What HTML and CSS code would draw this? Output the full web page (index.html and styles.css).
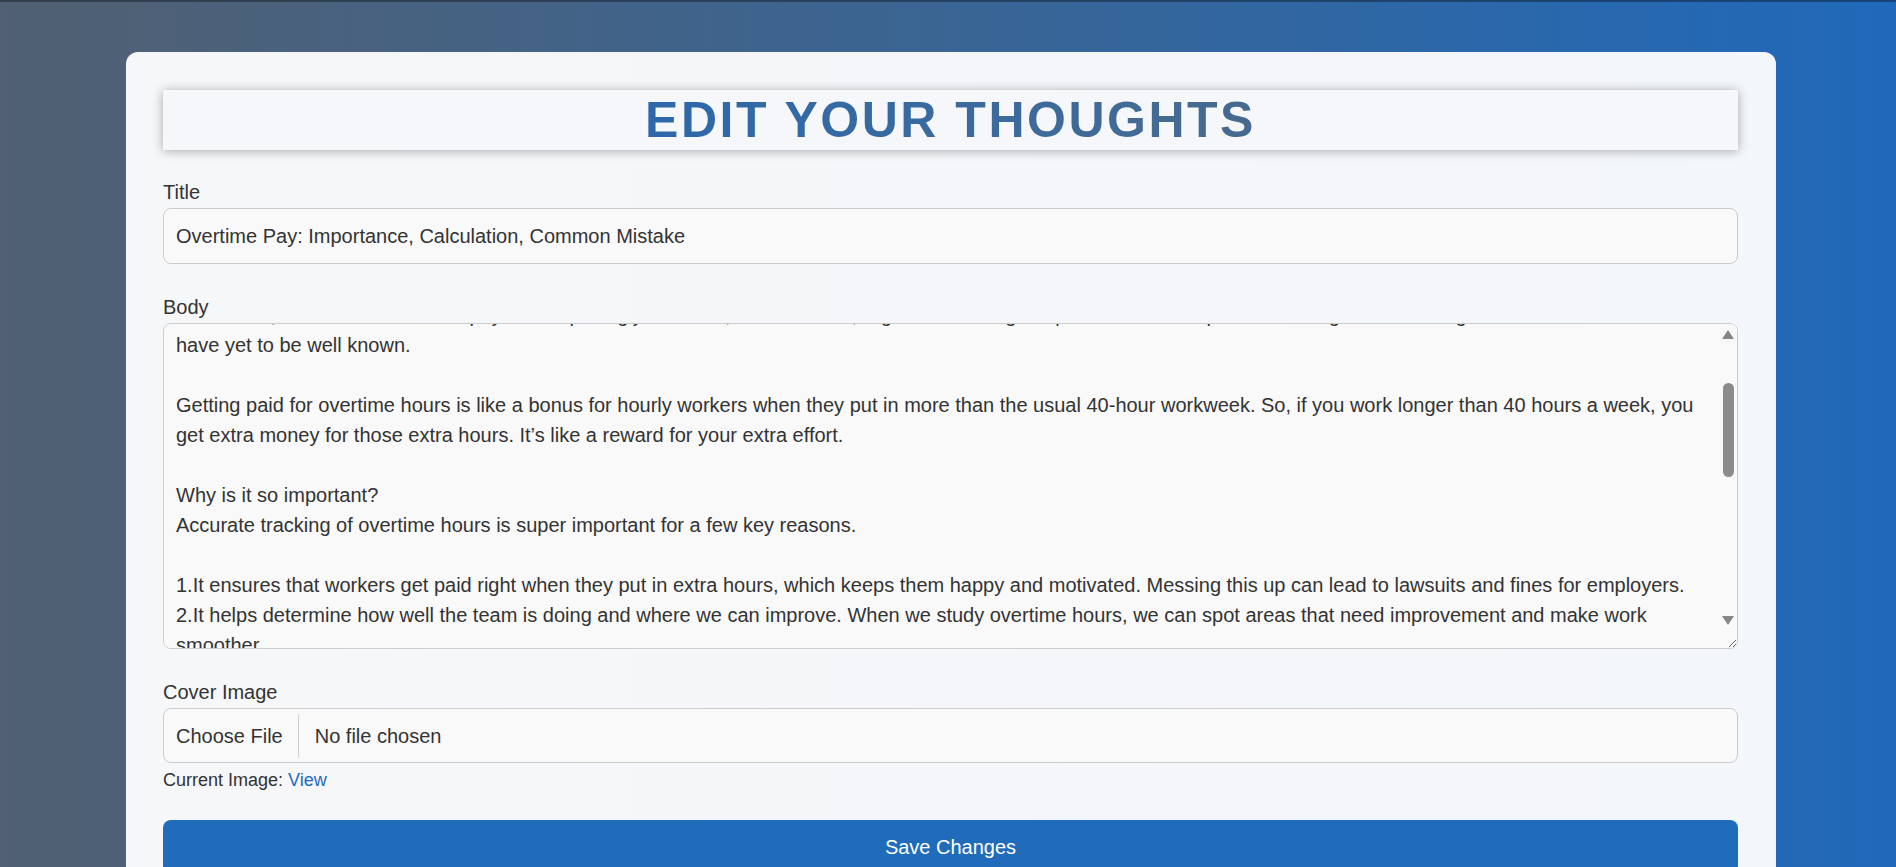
FILE: index.html
```html
<!DOCTYPE html>
<html lang="en">
<head>
<meta charset="utf-8">
<title>Edit Your Thoughts</title>
<link rel="stylesheet" href="styles.css">
<script src="script.js" defer></script>
</head>
<body>
<main class="card">
  <h1 class="page-title"><span class="page-title-text">EDIT YOUR THOUGHTS</span></h1>
  <form class="edit-form" action="#">
    <div class="field">
      <label class="field-label" for="title">Title</label>
      <input id="title" class="field-input" type="text" value="Overtime Pay: Importance, Calculation, Common Mistake">
    </div>
    <div class="field">
      <label class="field-label" for="body">Body</label>
      <div class="textarea-wrap">
        <textarea id="body" class="field-input field-textarea">In today's fast-paced work environment, many employees find themselves working beyond their regular hours to meet deadlines and keep up with demands.

Overtime pay is one of the most important parts of employee compensation, yet it is often misunderstood by both workers and their employers.
Many people are unsure how overtime is calculated, which hours count toward it, and what their rights are under the law in their state.
As a result, mistakes in overtime pay are surprisingly common, and the rules, regulations and good practices that help businesses get overtime right
have yet to be well known.

Getting paid for overtime hours is like a bonus for hourly workers when they put in more than the usual 40-hour workweek. So, if you work longer than 40 hours a week, you get extra money for those extra hours. It’s like a reward for your extra effort.

Why is it so important?
Accurate tracking of overtime hours is super important for a few key reasons.

1.It ensures that workers get paid right when they put in extra hours, which keeps them happy and motivated. Messing this up can lead to lawsuits and fines for employers.
2.It helps determine how well the team is doing and where we can improve. When we study overtime hours, we can spot areas that need improvement and make work smoother.
3.It helps businesses plan their budgets and staffing better, so they know when to hire more people instead of relying on extra hours.

How to calculate overtime pay?
Calculating overtime pay is pretty simple once you know the basics. Most workers get paid 1.5 times their regular hourly rate for every hour over 40.
For example, if you earn $20 an hour and work 45 hours in a week, you get $800 for regular hours and $150 for overtime, for a total of $950.

Common mistakes
1.Not counting all hours worked, such as time spent on training, meetings, or answering emails after work.
2.Using the wrong regular rate by leaving out bonuses, commissions, or shift differentials.
3.Classifying workers as exempt when they should actually be eligible for overtime pay.
4.Averaging hours across two weeks instead of calculating overtime for each workweek separately.

Conclusion
Getting overtime pay right is good for everyone. Workers feel valued, and businesses stay out of legal trouble.
A little attention to the details goes a long way.</textarea>
        <div class="fake-scrollbar" aria-hidden="true">
          <span class="sb-button"><span class="sb-arrow sb-arrow-up"></span></span>
          <span class="sb-thumb"></span>
          <span class="sb-button sb-button-down"><span class="sb-arrow sb-arrow-down"></span></span>
        </div>
      </div>
    </div>
    <div class="field">
      <label class="field-label" for="cover">Cover Image</label>
      <input id="cover" class="field-input file-input" type="file">
      <div class="field-note">Current Image: <a class="field-link" href="#">View</a></div>
    </div>
    <button class="save-btn" type="submit">Save Changes</button>
  </form>
</main>
</body>
</html>
```

FILE: styles.css
```css
html {
  overflow: hidden;
}

body {
  margin: 0;
  padding: 50px 120px 0 126px;
  min-height: 867px;
  box-sizing: border-box;
  border-top: 2px solid rgba(0, 0, 0, 0.35);
  background: linear-gradient(90deg, #516072 0%, #3a6594 50%, #2069ba 100%);
  font-family: "Liberation Sans", Arial, sans-serif;
  color: #333;
}

.card {
  background: linear-gradient(90deg, #f6f7f9 0%, #f3f6fa 100%);
  border-radius: 12px;
  padding: 38px 38px 40px 37px;
}

.page-title {
  margin: 0 0 27px;
  height: 60px;
  line-height: 60px;
  text-align: center;
  background: #f5f7fa;
  box-shadow: 0 1px 10px rgba(0, 0, 0, 0.32);
  font-size: 50px;
  font-weight: bold;
  letter-spacing: 2.5px;
}

.page-title-text {
  display: inline-block;
  background: linear-gradient(90deg, #2d68ab 0%, #3a6a9f 50%, #476a8e 100%);
  -webkit-background-clip: text;
  background-clip: text;
  color: transparent;
}

.edit-form {
  display: flex;
  flex-direction: column;
}

.field {
  margin-bottom: 28px;
}

.field-label {
  display: block;
  font-size: 20px;
  line-height: 30px;
  margin-bottom: 1px;
  color: #333;
}

.field-input {
  display: block;
  width: 100%;
  box-sizing: border-box;
  margin: 0;
  padding: 12px;
  font-family: "Liberation Sans", Arial, sans-serif;
  font-size: 20px;
  line-height: 30px;
  color: #333;
  background: #f9f9f9;
  border: 1px solid #ccc;
  border-radius: 8px;
  outline: none;
}

.textarea-wrap {
  position: relative;
}

.field-textarea {
  height: 326px;
  padding-right: 27px;
  resize: both;
}

.fake-scrollbar {
  position: absolute;
  top: 1px;
  right: 1px;
  width: 15px;
  height: 308px;
  display: flex;
  flex-direction: column;
  align-items: center;
  background: #f9f9f9;
  border-top-right-radius: 7px;
  pointer-events: none;
}

.sb-button {
  height: 21px;
  width: 15px;
  display: flex;
  align-items: center;
  justify-content: center;
}

.sb-button-down {
  margin-top: auto;
  height: 24px;
}

.sb-arrow {
  width: 0;
  height: 0;
  margin-left: -3px;
  border-left: 6.5px solid transparent;
  border-right: 6.5px solid transparent;
}

.sb-arrow-up {
  border-bottom: 9px solid #858585;
}

.sb-arrow-down {
  border-top: 9px solid #858585;
}

.sb-thumb {
  margin-top: 38px;
  margin-left: -3px;
  width: 11px;
  height: 94px;
  border-radius: 6px;
  background: #8b8b8b;
}

.file-input {
  padding: 5px 12px;
  height: 55px;
}

.file-input::file-selector-button {
  font-family: "Liberation Sans", Arial, sans-serif;
  font-size: 20px;
  line-height: 30px;
  color: #333;
  background: transparent;
  border: none;
  border-right: 1px solid #ccc;
  border-radius: 0;
  padding: 7px 15px 7px 0;
  margin: 0 16px 0 0;
}

.field-note {
  margin-top: 4px;
  font-size: 18px;
  line-height: 26px;
  color: #333;
}

.field-link {
  color: #1e6bbf;
  text-decoration: none;
}

.save-btn {
  display: block;
  width: 100%;
  margin-top: -1px;
  padding: 12px;
  font-family: "Liberation Sans", Arial, sans-serif;
  font-size: 20px;
  line-height: 30px;
  color: #fff;
  background: #206bba;
  border: none;
  border-radius: 8px;
}
```

FILE: script.js
```js
document.getElementById('body').scrollTop = 156;
```
